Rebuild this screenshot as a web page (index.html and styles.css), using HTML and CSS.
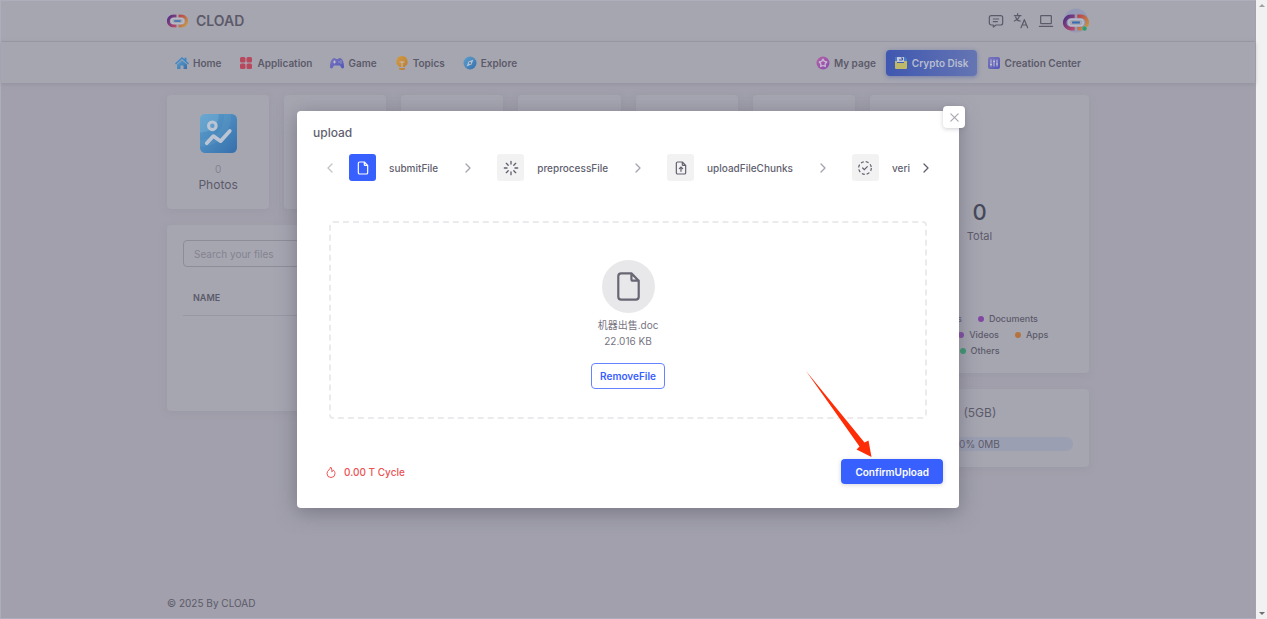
FILE: index.html
```html
<!DOCTYPE html>
<html lang="en">
<head>
<meta charset="utf-8">
<title>CLOAD</title>
<link rel="stylesheet" href="styles.css">
</head>
<body>
<svg class="defs" aria-hidden="true">
  <defs>
    <linearGradient id="sky" x1="0" y1="0" x2="1" y2="1"><stop offset="0" stop-color="#5ca0cd"/><stop offset="1" stop-color="#366fac"/></linearGradient>
    <linearGradient id="warm" x1="0" y1="0" x2="1" y2="1"><stop offset="0" stop-color="#d39b3f"/><stop offset="1" stop-color="#b57d3c"/></linearGradient>
    <linearGradient id="pink" x1="0" y1="0" x2="1" y2="1"><stop offset="0" stop-color="#b262a5"/><stop offset="1" stop-color="#8b4cae"/></linearGradient>
    <linearGradient id="violet" x1="0" y1="0" x2="1" y2="1"><stop offset="0" stop-color="#7c78bd"/><stop offset="1" stop-color="#5155b8"/></linearGradient>
    <linearGradient id="ringLeft" x1="0" y1="0" x2="1" y2="1"><stop offset="0" stop-color="#4d3188"/><stop offset="1" stop-color="#bd4968"/></linearGradient>
    <linearGradient id="ringRight" x1="0" y1="0" x2="1" y2="1"><stop offset="0" stop-color="#b8434d"/><stop offset="1" stop-color="#c79a45"/></linearGradient>
    <symbol id="chevron" viewBox="0 0 12 12"><path d="M4 2l4 4-4 4" fill="none" stroke="currentColor" stroke-linecap="round" stroke-linejoin="round"/></symbol>
    <symbol id="file" viewBox="0 0 24 24"><path d="M14 3v4a1 1 0 0 0 1 1h4M17 21H7a2 2 0 0 1-2-2V5a2 2 0 0 1 2-2h7l5 5v11a2 2 0 0 1-2 2z" fill="none" stroke="currentColor" stroke-linecap="round" stroke-linejoin="round"/></symbol>
    <symbol id="rings" viewBox="0 0 20 13">
      <path d="M9 1.800H6a4.700 4.700 0 0 0 0 9.400h3" fill="none" stroke="url(#ringLeft)" stroke-width="2.800"/>
      <path d="M11 1.800h3a4.700 4.700 0 0 1 0 9.400h-3" fill="none" stroke="url(#ringRight)" stroke-width="2.800"/>
      <path d="M13 3.900H7a2.600 2.600 0 0 0 0 5.200h6a2.600 2.600 0 0 0 0-5.200z" fill="#a6a6b1" stroke="#b9bfd0"/>
      <path d="M7 6.500h6" stroke="#356bb0" stroke-width="1.600"/>
    </symbol>
  </defs>
</svg>

<div class="page">
  <header class="topbar">
    <div class="container topbar-row">
      <a class="brand" href="#"><svg class="brand-logo" viewBox="0 0 20 13"><use href="#rings"/></svg>CLOAD</a>
      <div class="tools">
        <button class="tool" aria-label="Messages"><svg viewBox="0 0 24 24"><path d="M8 9h8M8 13h6M5 4h14a3 3 0 0 1 3 3v8a3 3 0 0 1-3 3h-7l-4 3v-3H5a3 3 0 0 1-3-3V7a3 3 0 0 1 3-3z"/></svg></button>
        <button class="tool" aria-label="Language"><svg viewBox="0 0 24 24"><path d="M2 4h10M7 1v3M10 4c-1 4-3 6-8 8M4 6c1 4 4 6 7 6M12 22l5-12 5 12M13.500 18h7"/></svg></button>
        <button class="tool" aria-label="Theme"><svg viewBox="0 0 24 24"><path d="M2 20h20M5 4h14a1 1 0 0 1 1 1v10a1 1 0 0 1-1 1H5a1 1 0 0 1-1-1V5a1 1 0 0 1 1-1z"/></svg></button>
        <button class="avatar" aria-label="Account"><svg viewBox="0 0 26 26"><circle cx="13" cy="12.500" r="12" fill="#959ab6"/><use href="#rings" x="0" y="6" width="26" height="17"/><circle cx="21.500" cy="20.500" r="2.500" fill="#2d9e6b" stroke="#a6a6b1" stroke-width=".6"/></svg></button>
      </div>
    </div>
  </header>
  <nav class="nav">
    <div class="container nav-row">
      <div class="nav-group">
        <a class="nav-link" href="#"><svg viewBox="0 0 14 14"><path d="M7 1l2.500 2.300V1.800h2v3.300L14 7.600l-1 .9-6-5.400-6 5.400-1-.9z" fill="#3f87c4"/><path d="M2 8.500l5-4.300 5 4.300V13H8.500V9.500h-3V13H2z" fill="url(#sky)"/></svg>Home</a>
        <a class="nav-link" href="#"><svg viewBox="0 0 14 14" fill="#b8485e"><rect x="1" y="1" width="5.500" height="5.500" rx="1.500"/><rect x="7.500" y="1" width="5.500" height="5.500" rx="1.500"/><rect x="1" y="7.500" width="5.500" height="5.500" rx="1.500"/><rect x="7.500" y="7.500" width="5.500" height="5.500" rx="1.500"/></svg>Application</a>
        <a class="nav-link" href="#"><svg viewBox="0 0 14 14"><path d="M4 2h1l1 1h2l1-1h1c2 0 4 4 4 8.500 0 2.500-2 2.500-3 .8L10 9.500H4l-1 1.800c-1 1.700-3 1.700-3-.8C0 6 2 2 4 2z" fill="url(#violet)"/><path d="M3 6h3M4.500 4.500v3M8.500 6h1M10.500 5h1M10.500 7h1" stroke="#c0c0cd"/></svg>Game</a>
        <a class="nav-link" href="#"><svg viewBox="0 0 14 14"><path d="M7 0a5.700 5.700 0 0 1 3 10.500V11H4v-.5A5.700 5.700 0 0 1 7 0zM4 12h6v1.500L8 14H6l-2-.5z" fill="url(#warm)"/><path d="M4.500 6h5M7 6v5" stroke="#c5c0bc"/></svg>Topics</a>
        <a class="nav-link" href="#"><svg viewBox="0 0 14 14"><circle cx="7" cy="7" r="6.500" fill="url(#sky)"/><path d="M10.500 3.500L8.500 8.500l-5 2 2-5z" fill="#b4bfd0"/><circle cx="7" cy="7" r="1" fill="#387cb7"/></svg>Explore</a>
      </div>
      <div class="nav-group nav-group-end">
        <a class="nav-link" href="#"><svg viewBox="0 0 14 14"><circle cx="7" cy="7" r="6.500" fill="url(#pink)"/><path d="M7 3.200l1.300 2.200 2.500.6-1.700 1.900.2 2.600L7 9.500l-2.300 1 .2-2.600L3.200 6l2.500-.6z" fill="none" stroke="#c8b9d3" stroke-width="1.300" stroke-linejoin="round"/></svg>My page</a>
        <a class="nav-link nav-link-active" href="#"><svg viewBox="0 0 14 14"><path d="M1 1h10l2 2v3H1z" fill="#4c7dc4"/><path d="M3 1h7v5H3z" fill="#c2c8da"/><path d="M7 2h1.500v2H5" fill="none" stroke="#3b57a5"/><path d="M1 5h2v2h7V5h3v7a1 1 0 0 1-1 1H2a1 1 0 0 1-1-1z" fill="#bdb968"/></svg>Crypto Disk</a>
        <a class="nav-link" href="#"><svg viewBox="0 0 14 14"><rect x="1" y="1" width="12" height="12" rx="2" fill="url(#violet)"/><path d="M4 3.500v7M7 3.500v7M10 3.500v7M3 8.500h2M6 5.500h2M9 8h2" stroke="#c0c0d4"/></svg>Creation Center</a>
      </div>
    </div>
  </nav>

  <main class="container content">
    <div class="primary">
      <div class="categories">
        <section class="card category">
          <svg class="category-icon" viewBox="0 0 36 38"><rect width="36" height="38" rx="5" fill="url(#sky)"/><path d="M18 0c1 10-7 18-18 18V5a5 5 0 0 1 5-5z" fill="#7eb5d8" opacity=".4"/><path d="M27 0c0 17-10 27-27 29" fill="none" stroke="#7fb4da" stroke-width="7" opacity=".15"/><circle cx="12" cy="11.500" r="3.700" fill="none" stroke="#bcc5d4" stroke-width="3"/><path d="M6.500 28.500l6.500-7 7 5 9-10" fill="none" stroke="#bcc5d4" stroke-width="3.600" stroke-linecap="round" stroke-linejoin="round"/></svg>
          <span class="category-count">0</span>
          <span class="category-name">Photos</span>
        </section>
        <section class="card"></section>
        <section class="card"></section>
        <section class="card"></section>
        <section class="card"></section>
        <section class="card"></section>
      </div>
      <section class="card files">
        <input class="search" type="text" placeholder="Search your files" aria-label="Search your files">
        <table class="file-table"><thead><tr><th scope="col">NAME</th></tr></thead></table>
      </section>
    </div>
    <aside class="secondary">
      <section class="card summary">
        <div class="total"><strong>0</strong><span>Total</span></div>
        <ul class="legend">
          <li class="blue">Photos</li><li class="purple">Documents</li>
        </ul>
        <ul class="legend">
          <li class="blue">Misc</li><li class="purple">Videos</li><li class="orange">Apps</li>
        </ul>
        <ul class="legend">
          <li class="green">Others</li>
        </ul>
      </section>
      <section class="card storage">
        <h2><span>Total space</span><span>(5GB)</span></h2>
        <div class="meter">0% 0MB</div>
      </section>
    </aside>
  </main>
  <footer class="container footer">© 2025 By CLOAD</footer>

  <div class="overlay">
    <div class="dialog" role="dialog" aria-labelledby="dialog-title">
      <button class="close" aria-label="Close"><svg viewBox="0 0 12 12"><path d="M2 2l8 8M10 2l-8 8"/></svg></button>
      <h1 id="dialog-title">upload</h1>
      <div class="stepper">
        <button class="arrow arrow-off" aria-label="Previous"><svg class="flip"><use href="#chevron"/></svg></button>
        <ol class="steps">
          <li class="step step-on"><span class="step-icon"><svg viewBox="0 0 24 24" stroke-width="1.800"><use href="#file"/></svg></span>submitFile</li>
          <li class="divider"><svg><use href="#chevron"/></svg></li>
          <li class="step"><span class="step-icon"><svg viewBox="0 0 24 24" stroke-width="2"><path d="M12 2v4M12 18v4M2 12h4M18 12h4M5 5l2.800 2.800M16.200 16.200L19 19M5 19l2.800-2.800M16.200 7.800L19 5"/></svg></span>preprocessFile</li>
          <li class="divider"><svg><use href="#chevron"/></svg></li>
          <li class="step"><span class="step-icon"><svg viewBox="0 0 24 24" stroke-width="1.800"><use href="#file"/><path d="M12 17v-6M9.500 13l2.500-2.500 2.500 2.500"/></svg></span>uploadFileChunks</li>
          <li class="divider"><svg><use href="#chevron"/></svg></li>
          <li class="step"><span class="step-icon"><svg viewBox="0 0 24 24" stroke-width="1.800"><circle cx="12" cy="12" r="9.500" stroke-linecap="butt" stroke-dasharray="4.500 2.960"/><path d="M8.500 12l2.500 2.500 4.500-4.500"/></svg></span>verifyFile</li>
        </ol>
        <button class="arrow" aria-label="Next"><svg><use href="#chevron"/></svg></button>
      </div>
      <div class="dropzone">
        <span class="file-badge"><svg viewBox="0 0 24 24" stroke-width="1.500"><use href="#file"/></svg></span>
        <span class="file-name">机器出售.doc</span>
        <span class="file-size">22.016 KB</span>
        <button class="remove">RemoveFile</button>
      </div>
      <div class="dialog-footer">
        <span class="cost"><svg viewBox="0 0 24 24"><path d="M11 2c0 5-7 7-7 13a8 8 0 0 0 16 0c0-3-1.500-5.500-3.500-7-.5 2-1.500 3-3 3.500C14 7.500 13.500 4 11 2z"/></svg>0.00 T Cycle</span>
        <button class="confirm">ConfirmUpload</button>
      </div>
      <svg class="pointer" viewBox="0 0 66 86"><path d="M0 0L58.500 71.500 62.500 69.500 65.500 86 50.500 78.500 53.500 75.500z" fill="#ff2d05"/></svg>
    </div>
  </div>
</div>
<div class="scrollbar" aria-hidden="true"><i class="up"></i><i class="down"></i></div>
</body>
</html>
```

FILE: styles.css
```css
* { box-sizing: border-box; }

body {
  margin: 0;
  height: 100vh;
  display: grid;
  grid-template-columns: 1fr 11px;
  font: 10px/16px Inter, "Noto Sans CJK SC", sans-serif;
  color: #5c5a69;
  background: #a1a0ac;
  overflow: hidden;
}

h1, h2, ul, ol { margin: 0; padding: 0; font-weight: 500; }
li { list-style: none; }
a { color: inherit; text-decoration: none; }
button { font: inherit; color: inherit; border: 0; padding: 0; background: none; }
.defs { position: absolute; width: 0; height: 0; }

.page {
  position: relative;
  display: flex;
  flex-direction: column;
  border: 1px solid #aeadbb;
  border-right-color: #a3a2ae;
  min-width: 0;
}

.container { width: 100%; max-width: 922px; margin: 0 auto; }

.topbar { background: #a6a6b1; border-bottom: 1px solid #9b9aa7; }
.topbar-row { height: 40px; display: flex; align-items: center; justify-content: space-between; }
.brand { display: flex; align-items: center; gap: 8px; font-size: 14px; font-weight: 600; }
.brand-logo { width: 21px; height: 14px; }
.tools { display: flex; align-items: center; gap: 9px; }
.tool svg { display: block; width: 16px; height: 16px; fill: none; stroke: currentColor; stroke-width: 1.8; stroke-linecap: round; stroke-linejoin: round; }
.avatar svg { display: block; width: 26px; height: 26px; }

.nav { background: #a6a6b1; box-shadow: 0 1px 4px #83829080; }
.nav-row { height: 41px; padding: 0 8px; display: flex; align-items: center; justify-content: space-between; }
.nav-group { display: flex; align-items: center; gap: 18px; }
.nav-group-end { gap: 10px; }
.nav-link { display: flex; align-items: center; gap: 4px; font-weight: 600; }
.nav-link svg { width: 14px; height: 14px; }
.nav-link-active {
  height: 26px;
  padding: 0 8px;
  border-radius: 4px;
  color: #b8bdd0;
  background: linear-gradient(90deg, #3f57b0, #6575b3);
  box-shadow: 0 1px 4px #5262a599;
}

.content { display: flex; align-items: flex-start; gap: 15px; padding-top: 12px; }
.primary { flex: 1; display: grid; gap: 16px; }
.secondary { width: 219px; display: grid; gap: 16px; }
.card { background: #a6a6b1; border-radius: 4px; box-shadow: 0 2px 7px #8b8a984d; }

.categories { display: grid; grid-template-columns: repeat(6, 1fr); gap: 15px; }
.category { display: flex; flex-direction: column; align-items: center; padding: 19px 0 16px; }
.category-icon { width: 37px; height: 39px; margin-bottom: 8px; }
.category-count { color: #83828f; }
.category-name { font-size: 12px; }

.files { padding: 15px 16px 95px; }
.search {
  display: block;
  width: 100%;
  height: 27px;
  padding: 0 10px;
  font: inherit;
  background: none;
  border: 1px solid #8d8c99;
  border-radius: 4px;
}
.search::placeholder { color: #84838f; opacity: 1; }
.file-table { width: 100%; margin-top: 14px; border-collapse: collapse; }
.file-table th { height: 34px; padding: 0 10px; border-bottom: 1px solid #9897a3; text-align: left; font-size: 9px; font-weight: 600; }

.summary { padding: 103px 16px 14px; }
.total { display: flex; flex-direction: column; align-items: center; gap: 2px; margin-bottom: 67px; font-size: 11px; }
.total strong { font-size: 22px; line-height: 28px; font-weight: 500; color: #454858; }
.legend { display: flex; justify-content: center; gap: 16px; font-size: 9px; }
.legend li { display: flex; align-items: center; gap: 5px; }
.legend li::before { content: ""; width: 6px; height: 6px; border-radius: 50%; background: var(--dot); }
.blue { --dot: #4566b4; }
.purple { --dot: #8149a3; }
.orange { --dot: #b5743f; }
.green { --dot: #38996e; }

.storage { padding: 16px; }
.storage h2 { display: flex; gap: 12px; font-size: 12px; font-weight: 400; margin-bottom: 16px; white-space: nowrap; }
.meter { height: 14px; line-height: 14px; border-radius: 7px; background: #9b9fb2; text-align: center; }

.footer { margin-top: auto; padding-bottom: 7px; }

.overlay { position: absolute; inset: 0; padding: 110px 16px 0; display: flex; align-items: flex-start; justify-content: center; }
.dialog {
  position: relative;
  width: 662px;
  padding: 14px 16px 24px;
  border-radius: 4px;
  background: #fff;
  box-shadow: 0 4px 20px #5c5a6b99;
  color: #625f6f;
}
.dialog h1 { font-size: 12px; }
.close {
  position: absolute;
  top: -5px;
  right: -6px;
  width: 22px;
  height: 22px;
  display: grid;
  place-items: center;
  border-radius: 4px;
  background: #fff;
  box-shadow: 0 1px 4px #5c5a6b4d;
}
.close svg { width: 11px; height: 11px; stroke: #a9a8b2; stroke-width: 1.3; stroke-linecap: round; }

.stepper { display: flex; align-items: center; gap: 10px; padding: 0 11px; margin-top: 13px; }
.arrow svg, .divider svg { display: block; width: 12px; height: 12px; stroke-width: 1.3; }
.arrow.arrow-off { color: #c4c3ca; }
.divider { color: #a5a4ae; }
.flip { transform: scaleX(-1); }
.steps { flex: 1; min-width: 0; display: flex; align-items: center; overflow: hidden; padding-left: 3px; }
.step { flex: none; display: flex; align-items: center; gap: 13px; font-weight: 500; }
.step-icon { width: 27px; height: 27px; display: grid; place-items: center; border-radius: 3px; background: #f2f2f3; }
.step-icon svg { width: 16px; height: 16px; fill: none; stroke: currentColor; stroke-linecap: round; }
.step-on .step-icon { color: #fff; background: #3860ff; }
.divider { flex: none; padding: 0 23px 0 24px; }

.dropzone {
  margin: 40px 16px;
  padding: 37px 0 28px;
  display: flex;
  flex-direction: column;
  align-items: center;
  border: 2px dashed #ebebed;
  border-radius: 4px;
  color: #777582;
}
.file-badge { width: 53px; height: 53px; margin-bottom: 4px; display: grid; place-items: center; border-radius: 50%; color: #686673; background: #e8e8ea; }
.file-badge svg { width: 35px; height: 35px; }
.remove { height: 26px; margin-top: 14px; padding: 0 8px; border: 1px solid #6784ff; border-radius: 4px; color: #3860ff; font-weight: 600; }

.dialog-footer { display: flex; align-items: center; justify-content: space-between; padding-left: 12px; }
.cost { display: flex; align-items: center; gap: 7px; color: #ea5455; font-weight: 500; }
.cost svg { width: 12px; height: 12px; fill: none; stroke: currentColor; stroke-width: 2; stroke-linejoin: round; }
.confirm { height: 25px; padding: 0 14px; border-radius: 4px; color: #fff; background: #3860ff; font-weight: 600; box-shadow: 0 1px 4px #5c5a6b40; }
.pointer { position: absolute; right: 87px; bottom: 51px; width: 66px; height: 86px; }

.scrollbar { display: flex; flex-direction: column; align-items: center; justify-content: space-between; padding: 4px 0; background: #f1f1f1; }
.up, .down { border: 3px solid transparent; }
.up { border-top: 0; border-bottom-color: #a0a0a0; }
.down { border-bottom: 0; border-top-color: #707070; }
```
